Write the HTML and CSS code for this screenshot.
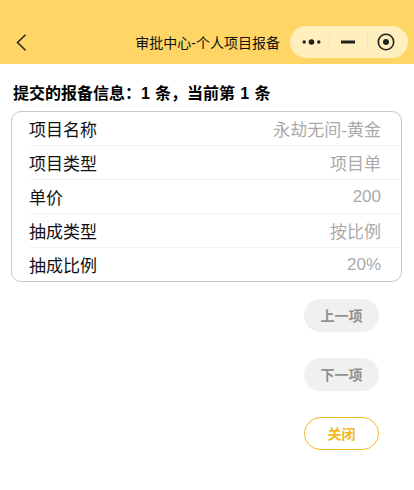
FILE: index.html
```html
<!DOCTYPE html>
<html lang="zh-CN">
  <head>
    <meta charset="UTF-8" />
    <meta name="viewport" content="width=device-width, initial-scale=1.0" />
    <title>审批中心-个人项目报备</title>
    <link rel="stylesheet" href="styles.css">
  </head>
  <body>
    <header class="navbar">
      <svg class="back-icon" width="11" height="17" viewBox="0 0 11 17">
        <path d="M9.5 0.7 L1.5 8.5 L9.5 16.3" fill="none" stroke="#222" stroke-width="1.5" />
      </svg>
      <span class="nav-title">审批中心-个人项目报备</span>
      <div class="capsule">
        <div class="capsule-item">
          <svg width="19" height="8" viewBox="0 0 19 8">
            <circle cx="2.2" cy="4" r="1.7" fill="#222" />
            <circle cx="9.5" cy="4" r="2.8" fill="#222" />
            <circle cx="16.8" cy="4" r="1.7" fill="#222" />
          </svg>
        </div>
        <div class="capsule-item">
          <svg width="14" height="4" viewBox="0 0 14 4">
            <rect x="0" y="0.5" width="14" height="3" fill="#222" />
          </svg>
        </div>
        <div class="capsule-item capsule-last">
          <svg width="18" height="18" viewBox="0 0 18 18">
            <circle cx="9" cy="9" r="7.7" fill="none" stroke="#222" stroke-width="1.6" />
            <circle cx="9" cy="9" r="3" fill="#222" />
          </svg>
        </div>
      </div>
    </header>

    <main class="content">
      <h2 class="summary">提交的报备信息：1 条，当前第 1 条</h2>
      <div class="card">
        <div class="row"><span class="label">项目名称</span><span class="value">永劫无间-黄金</span></div>
        <div class="row"><span class="label">项目类型</span><span class="value">项目单</span></div>
        <div class="row"><span class="label">单价</span><span class="value">200</span></div>
        <div class="row"><span class="label">抽成类型</span><span class="value">按比例</span></div>
        <div class="row"><span class="label">抽成比例</span><span class="value">20%</span></div>
      </div>
      <div class="actions">
        <button type="button" class="btn">上一项</button>
        <button type="button" class="btn">下一项</button>
        <button type="button" class="btn btn-close">关闭</button>
      </div>
    </main>
  </body>
</html>
```

FILE: styles.css
```css
body {
  font-family: "Liberation Sans", "Noto Sans CJK SC", sans-serif;
  margin: 0;
  padding: 0;
  background: #fff;
  color: #111;
}

.navbar {
  height: 64px;
  box-sizing: border-box;
  padding: 26px 6px 6px 16px;
  display: flex;
  align-items: center;
  background: #ffd666;
}

.back-icon {
  flex-shrink: 0;
}

.nav-title {
  flex: 1;
  text-align: right;
  font-size: 14px;
  color: #111;
  margin-right: 10px;
}

.capsule {
  width: 118px;
  height: 32px;
  box-sizing: border-box;
  padding: 0 3px;
  display: flex;
  align-items: center;
  border-radius: 16px;
  background: #feefbd;
}

.capsule-item {
  flex: 1;
  height: 18px;
  display: flex;
  align-items: center;
  justify-content: center;
  border-left: 1px solid #f8e3a8;
}

.capsule-item:first-child {
  border-left: none;
}

.capsule-last {
  padding-right: 1px;
}

.content {
  padding: 0 12px 0 11px;
}

.summary {
  margin: 0;
  padding: 20px 0 7px 2px;
  font-size: 16px;
  line-height: 20px;
  font-weight: bold;
  word-spacing: 0.75px;
  color: #000;
}

.card {
  border: 1px solid #c8c8c8;
  border-radius: 10px;
  padding-left: 17px;
  margin-bottom: 17px;
}

.row {
  height: 34px;
  box-sizing: border-box;
  padding-right: 20px;
  display: flex;
  justify-content: space-between;
  align-items: center;
  border-bottom: 1px solid #f2f2f2;
  font-size: 17px;
}

.row:last-child {
  border-bottom: none;
  height: 33px;
}

.value {
  color: #aaa;
}

.actions {
  display: flex;
  flex-direction: column;
  align-items: flex-end;
  gap: 26px;
  padding-right: 23px;
}

.btn {
  width: 75px;
  height: 33px;
  padding: 0 0 1px;
  border: none;
  border-radius: 17px;
  background: #f0f0f0;
  color: #909090;
  font-family: inherit;
  font-size: 14px;
  font-weight: bold;
  cursor: pointer;
}

.btn-close {
  background: #fff;
  border: 1px solid #f5b81c;
  color: #f5b81c;
}
```
